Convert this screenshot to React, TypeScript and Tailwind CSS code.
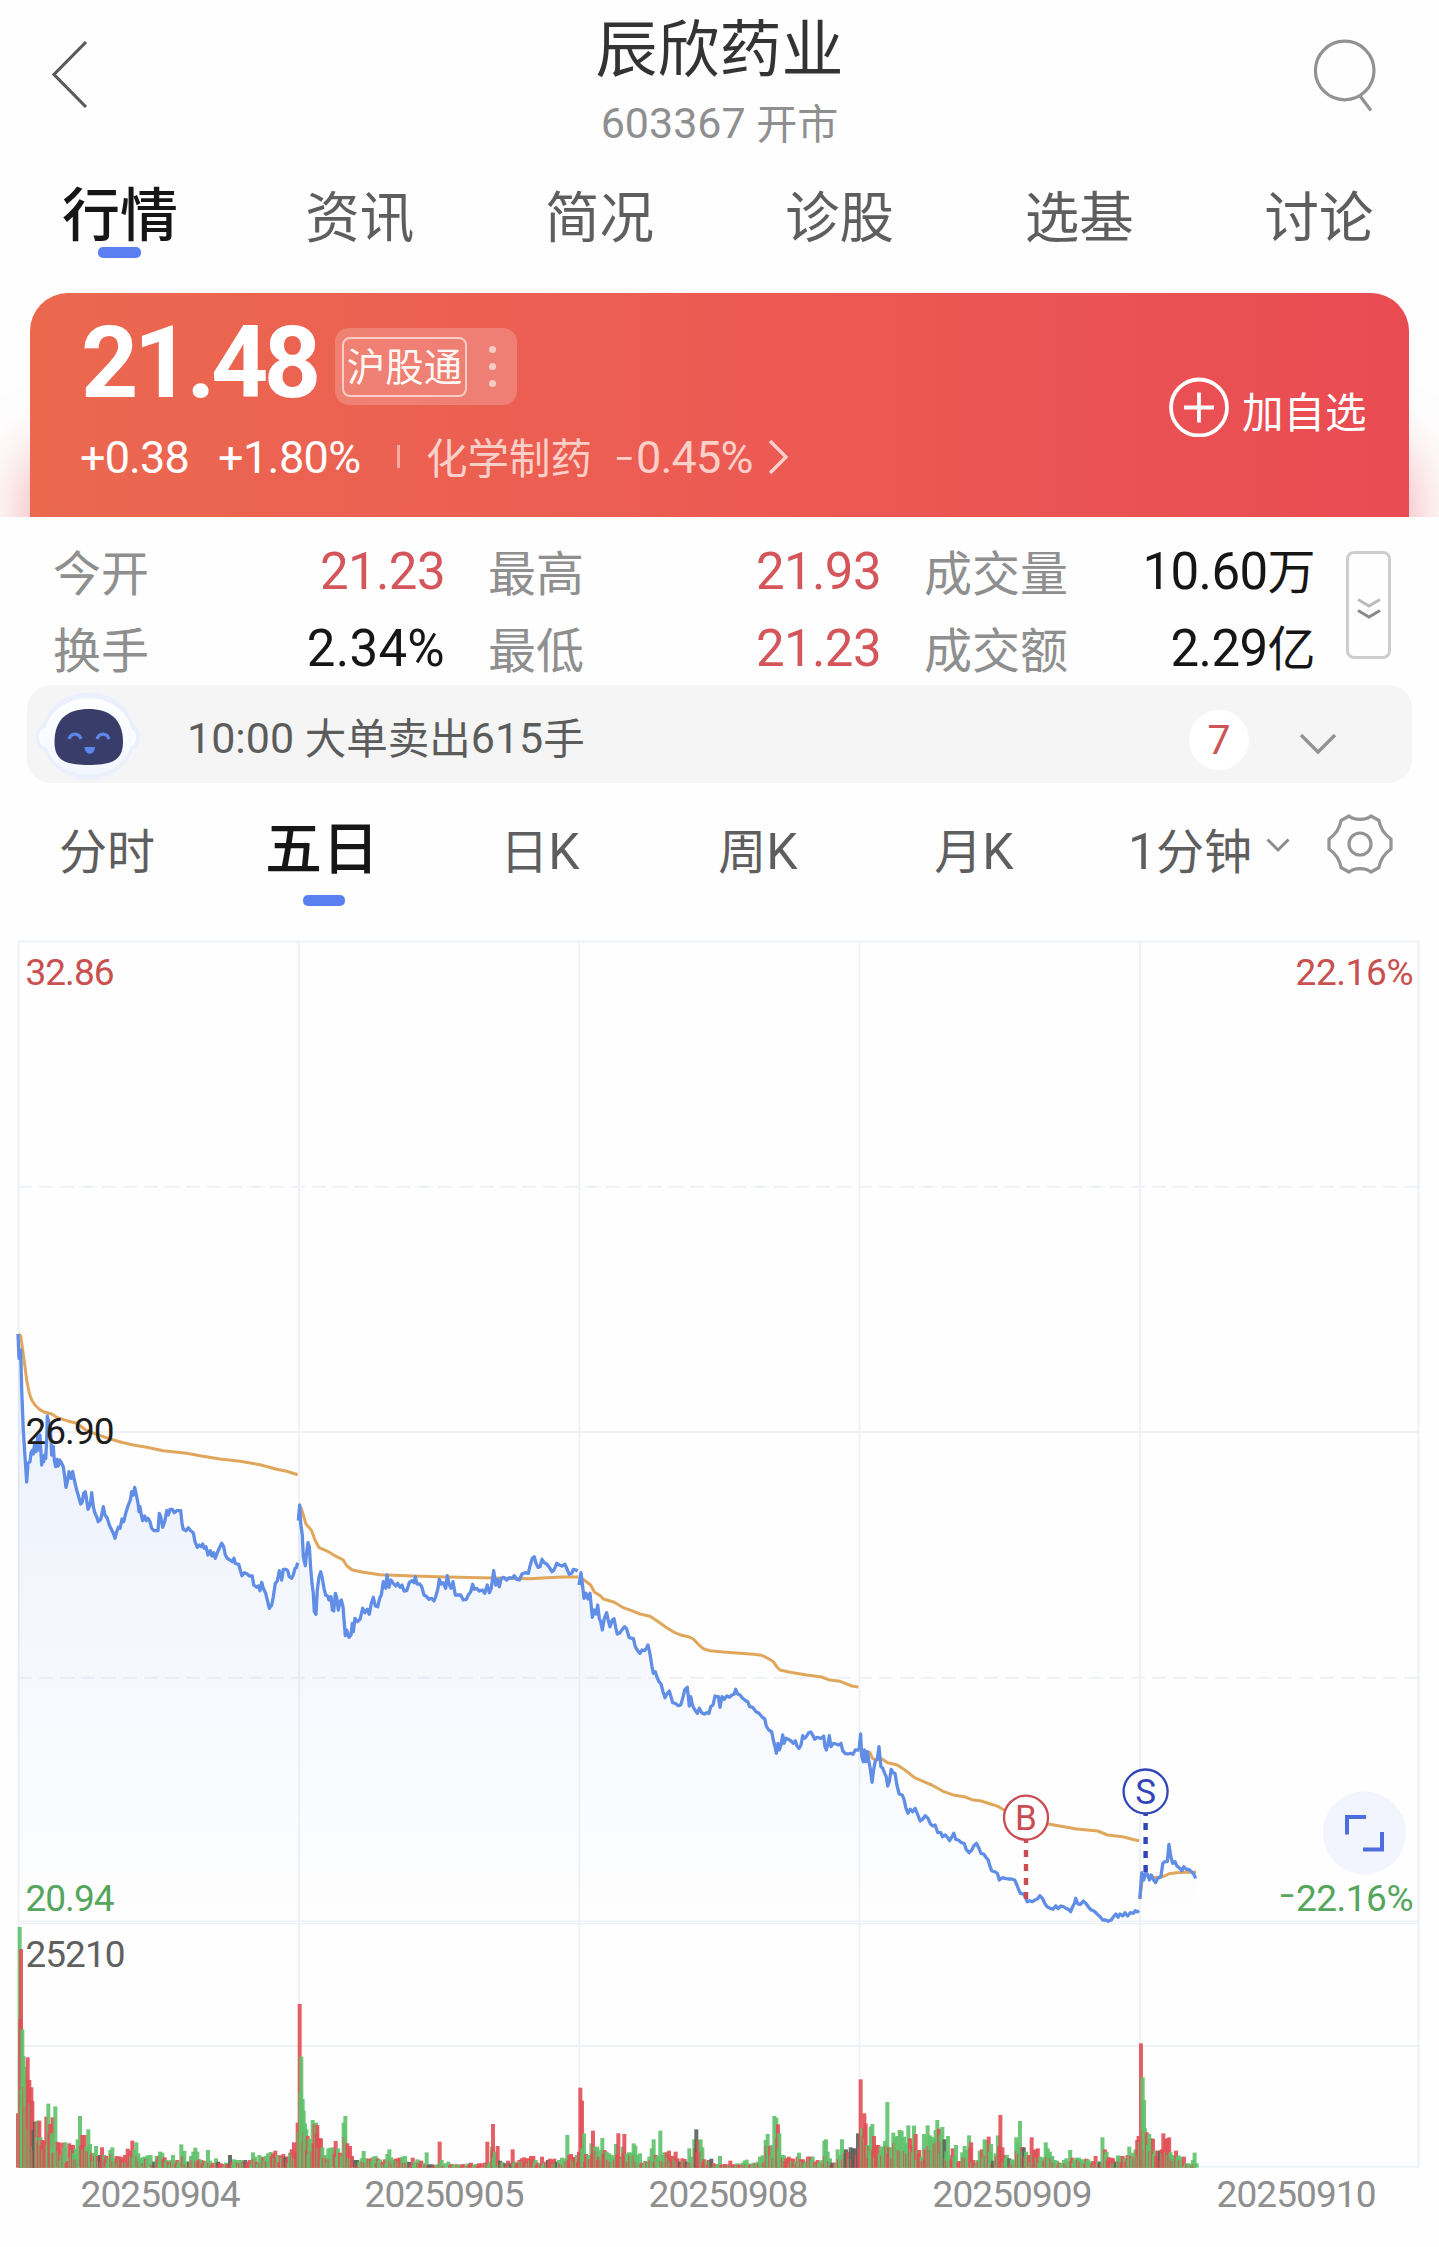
import React from "react";

type Frame = { x: number; y: number; sx: number; sy: number };

/* Each trading day was digitised on its own grid; a frame maps that grid to chart pixels. */
const F1: Frame = { x: 0, y: 1300, sx: 3, sy: 3 };
const F2: Frame = { x: 280, y: 1480, sx: 3, sy: 3 };
const F3: Frame = { x: 560, y: 1530, sx: 3, sy: 3 };
const F4: Frame = { x: 840, y: 1720, sx: 2.618, sy: 3 };
const V1: Frame = { x: 0, y: 1900, sx: 3, sy: 3 };
const V2: Frame = { x: 480, y: 1900, sx: 3, sy: 3 };
const V3: Frame = { x: 900, y: 1900, sx: 2.909, sy: 3 };

const PRICE: [Frame, string][] = [
  [
    F1,
    "54,102 57,175 62,150 65,270 70,390 75,470 80,546 84,490 90,485 93,458 98,450 100,462 104,430 108,455 113,410 117,450 120,405 125,495 128,470 131,485 134,465 137,475 140,420 142,348 147,370 151,375 155,465 160,440 163,480 167,500 171,478 175,498 179,480 184,488 190,500 194,530 198,562 203,540 207,515 213,535 218,515 223,540 230,570 236,590 242,612 247,605 251,580 256,575 260,600 264,628 268,620 272,605 275,578 280,620 285,640 290,650 295,665 302,658 306,640 310,620 315,645 322,655 328,675 335,690 340,700 345,715 350,695 355,682 360,685 366,657 371,665 377,640 385,615 391,600 395,575 400,585 404,562 410,590 415,615 417,635 420,620 424,645 428,662 434,648 439,662 444,655 450,665 455,685 462,692 474,692 478,640 482,650 488,682 494,665 500,632 505,645 510,628 517,628 523,638 530,632 542,632 546,670 550,688 558,692 565,683 572,692 580,698 585,725 592,742 598,735 604,740 608,732 613,745 618,740 624,765 631,752 636,768 641,758 646,775 653,755 660,740 665,730 671,740 676,765 682,775 690,780 697,785 702,775 706,790 716,793 722,815 726,827 733,818 742,822 748,828 757,828 761,855 770,862 776,858 780,872 785,847 790,865 797,880 803,905 808,925 815,915 820,890 826,850 832,843 838,812 845,840 850,808 858,808 863,812 868,830 875,835 880,825 885,805 889,803 893,788",
  ],
  [
    F2,
    "55,122 59,75 62,130 67,165 70,230 76,257 80,215 84,188 88,200 92,265 96,310 100,340 103,395 108,403 112,330 117,290 122,275 127,295 132,325 137,345 143,348 147,360 153,350 157,390 161,393 166,340 170,352 175,390 180,365 184,360 189,380 193,430 196,467 200,450 207,472 213,465 217,430 220,455 225,415 232,425 240,418 248,385 255,398 262,388 268,403 274,370 280,352 286,378 293,380 299,355 304,345 310,305 317,325 321,285 327,322 333,300 340,310 347,318 353,310 360,322 366,315 372,333 380,332 388,308 396,302 402,308 406,290 411,312 419,312 425,320 432,345 440,350 447,358 455,355 462,363 467,350 474,325 478,298 484,312 490,308 497,325 502,287 507,312 513,325 519,305 526,345 534,345 542,345 550,360 559,358 565,345 572,335 578,313 583,328 590,325 598,333 607,330 614,340 622,315 628,338 634,325 641,272 647,315 652,298 658,320 664,295 672,292 680,300 688,293 696,295 703,287 710,298 718,300 726,282 735,278 745,280 750,258 757,235 763,230 768,250 774,262 780,260 786,238 793,248 800,252 808,262 816,275 822,270 830,250 838,255 846,258 855,253 860,265 868,283 875,280 880,268 888,270 893,273",
  ],
  [
    F3,
    "57,165 63,128 68,170 72,205 78,190 84,207 90,190 94,230 97,262 103,240 108,252 113,225 118,265 122,275 127,300 133,265 140,248 145,272 150,290 156,272 162,266 167,292 172,312 180,308 187,298 194,290 200,297 207,322 214,325 220,325 226,350 233,362 240,370 246,360 254,362 259,355 264,345 270,372 276,410 280,430 286,425 291,442 297,455 303,462 309,485 315,503 322,490 328,483 333,500 338,518 346,520 355,527 362,525 368,505 374,480 382,472 388,528 392,500 398,528 405,540 412,550 418,535 425,548 433,552 440,548 447,550 452,530 459,525 465,498 470,500 475,500 480,532 486,500 493,508 500,498 508,502 516,495 523,492 527,478 533,492 540,495 548,505 557,512 563,515 569,530 578,532 588,545 597,550 607,562 614,566 619,588 626,600 635,605 640,630 645,650 649,670 654,640 658,660 663,645 668,615 672,640 678,625 685,628 692,632 700,640 706,632 711,648 717,655 723,645 728,617 734,625 740,618 746,608 752,606 758,615 764,628 772,622 780,625 787,623 791,618 795,650 799,660 804,640 808,617 813,650 820,640 828,642 836,645 843,640 848,662 855,670 863,672 872,670 879,673 886,660 894,660 898,660",
  ],
  [
    F4,
    "50,90 54,42 57,110 61,125 64,90 68,125 72,95 76,125 79,145 84,187 88,150 92,125 98,115 102,80 107,140 112,145 117,160 121,170 125,198 129,185 134,148 139,158 144,160 149,195 155,222 163,225 168,240 172,262 178,280 184,268 190,275 197,265 202,280 210,303 216,298 223,287 230,295 237,312 243,318 249,315 256,338 264,338 268,350 276,345 283,355 287,362 293,350 298,340 303,358 310,360 318,368 325,370 330,388 338,398 345,390 350,378 357,370 364,385 369,400 376,402 382,412 388,420 393,440 397,452 405,455 412,460 417,480 425,473 432,475 440,477 448,477 457,480 462,492 468,510 472,520 480,522 485,530 490,545 497,542 504,545 510,540 517,537 523,527 530,535 536,550 542,560 550,565 558,568 565,557 571,566 578,558 585,560 592,565 600,570 604,575 609,560 614,550 617,535 623,552 630,553 637,543 645,552 651,562 658,570 665,573 673,582 681,590 688,600 695,600 702,604 710,600 716,590 722,582 728,592 733,582 740,588 746,578 753,588 760,578 768,580 773,572 778,576 783,572",
  ],
  [
    F4,
    "785,537 790,458 795,480 800,458 805,462 810,480 815,465 820,478 826,488 832,475 840,470 845,430 850,425 857,425 861,373 866,410 871,430 877,425 882,438 890,445 895,452 900,440 907,448 913,448 920,455 926,462 931,475",
  ],
];

const AVERAGE: [Frame, string][] = [
  [
    F1,
    "57,102 62,108 68,150 75,200 80,240 88,280 95,300 105,315 118,328 135,337 155,342 170,352 200,362 230,370 260,392 290,403 330,417 370,428 400,435 440,442 490,452 560,460 600,467 660,477 720,484 780,494 830,508 860,514 893,524",
  ],
  [
    F2,
    "62,80 70,105 78,133 94,150 105,180 117,203 145,215 170,230 190,240 200,257 217,270 250,277 300,284 400,288 500,291 600,293 680,295 750,296 800,293 850,291 895,291",
  ],
  [
    F3,
    "60,163 66,148 72,150 92,165 103,186 122,198 130,207 163,217 190,233 215,242 240,252 270,259 295,275 320,293 345,308 365,316 385,320 400,327 415,343 430,356 450,362 490,366 530,369 580,373 605,376 622,384 640,395 650,410 660,420 690,427 740,435 785,441 805,449 840,454 875,468 895,471",
  ],
  [
    F4,
    "52,90 70,97 78,97 85,115 95,120 110,117 125,128 150,135 170,150 195,173 240,195 270,214 300,226 325,230 345,239 370,243 400,254 415,260 430,270 487,296 545,312 590,321 620,327 675,333 700,345 740,350 765,358 783,362",
  ],
  [F4, "785,537 792,475 800,465 810,470 820,472 838,472 850,468 862,461 880,458 905,457 932,457"],
];

const VOLUME: [Frame, string][] = [
  [
    V1,
    "54,640r 59,81g 63,147r 67,388g 70,468g 75,500g 79,530g 83,472r 88,540r 94,562r 97,603r 101,690k 105,665k 108,668r 113,662g 118,662r 121,712g 127,720r 133,723r 139,650r 145,611g 151,672r 158,652r 155,700g 166,619g 173,726r 179,728r 185,765g 190,728r 196,727g 203,783r 208,730r 214,735r 219,735r 222,760g 227,745g 233,718g 240,648g 247,705r 254,705r 259,740g 265,688g 270,732g 276,760r 282,760g 288,738g 294,768r 300,765k 306,742r 313,765g 319,768r 325,775g 331,750g 337,742g 343,775g 350,768r 356,770r 362,770r 368,775r 375,765r 383,746r 390,752r 397,722r 403,750g 409,727g 415,760g 420,775g 428,772g 434,770g 442,766g 452,765g 458,785g 463,785k 470,768g 476,768r 480,755g 487,758g 494,772r 500,780g 506,785r 513,780g 519,765g 525,782g 532,780r 537,785g 544,733g 553,753g 560,785g 567,785k 573,768g 580,755g 586,743g 592,755g 598,778r 604,780g 611,782r 618,785g 624,750g 630,782g 640,788r 648,775g 655,785k 662,790r 670,792r 678,788g 684,792r 690,765k 696,785r 702,778g 710,780g 717,780g 724,780g 730,785r 736,780k 743,785r 750,780r 759,757g 765,770g 770,785r 778,765g 784,770g 790,772r 797,768g 804,760g 812,756g 819,760r 826,752r 833,765g 842,766r 850,762r 857,770k 864,770r 870,758g 875,748r 882,727r 888,755r 893,668r 899,312r 904,470g 908,597g 911,632g 915,670g 919,688g 923,708r 928,717g 933,730g 938,660g 944,672r 948,668g 952,675r 958,715r 963,715r 967,742g 975,765g 980,775r 985,745g 992,743g 1000,742g 1007,723r 1014,745g 1020,758r 1031,668g 1036,648g 1042,730r 1050,738r 1056,768r 1065,780k 1072,780k 1078,785g 1085,775g 1091,753g 1098,775g 1106,776r 1113,775r 1120,770g 1127,768g 1133,775r 1140,778g 1148,785r 1155,778r 1162,762g 1168,748g 1174,772g 1180,780g 1187,776r 1194,775r 1200,773r 1207,770g 1215,768g 1222,785g 1228,786k 1238,773r 1245,785g 1252,778g 1258,782g 1264,782r 1272,790g 1280,757g 1288,793k 1297,793k 1305,795r 1313,793g 1319,725r 1325,780g 1335,790g 1345,785g 1355,792r 1363,793g 1372,793r 1380,793g 1390,792r 1400,795g 1405,790g 1413,788r 1422,793g 1430,792g 1437,790r",
  ],
  [
    V2,
    "5,790r 15,788r 22,725r 30,785g 36,740g 39,672r 45,755g 53,738r 60,782k 68,786g 76,790k 84,782r 92,790k 98,748r 105,785g 112,788r 118,780r 125,775r 132,772r 140,775r 147,775r 153,768r 160,768r 167,780g 173,788r 180,790g 186,770r 192,790g 198,785r 204,780k 210,776r 217,780r 223,776r 230,785k 237,780g 246,773g 252,785g 257,775g 262,705g 268,765r 273,762r 280,770r 285,775r 291,765g 297,755r 306,602r 301,563r 312,700g 318,762r 325,765g 334,730g 339,692r 346,740g 352,740g 357,770r 362,750g 367,714g 374,750r 380,755g 388,760g 395,765g 402,770g 408,732g 415,700r 421,770r 428,740g 433,702r 440,762g 447,757g 454,758g 461,730g 466,737g 472,765g 480,760g 487,788r 495,783g 501,785r 508,770g 515,745g 521,718g 527,765r 532,768g 541,692g 547,765g 553,757g 560,757r 567,752r 574,768r 580,768r 587,755r 593,775r 600,785k 607,775r 614,777r 620,785k 628,745g 635,770g 643,718g 649,688k 655,720r 662,718g 667,742g 673,778r 680,782g 687,780r 694,776k 701,790r 708,793r 714,792g 720,768g 727,793r 735,792r 743,793r 751,782r 758,793r 765,793r 772,790g 780,793r 787,788g 794,782g 800,779g 806,790g 813,793r 820,788g 826,790r 833,785g 840,770g 848,766g 857,720g 863,702g 870,738r 877,735g 883,648g 889,653g 894,673r 898,700g 905,765g 912,766g 919,775r 926,770r 932,775r 940,776r 947,785g 953,770r 957,758g 963,778r 970,778r 977,785g 984,770r 992,770r 998,770g 1005,785r 1013,780r 1021,785g 1027,780g 1033,722g 1038,718g 1043,755g 1050,775g 1057,788k 1065,788r 1073,748g 1080,765g 1086,718g 1092,750g 1098,748k 1105,755r 1112,742k 1119,745k 1126,745k 1134,700k 1142,538r 1147,685g 1153,640r 1157,670r 1163,735g 1168,740r 1172,680g 1177,672g 1182,708r 1188,735r 1195,735r 1203,740g 1209,740g 1215,723g 1222,606g 1227,742r 1233,742g 1240,698g 1246,710g 1253,708g 1259,690g 1265,692g 1272,710g 1278,730g 1285,676g 1290,715r 1296,735r 1302,677g 1307,702r 1313,750g 1318,750r 1325,770g 1332,702g 1336,748r 1343,676g 1349,706g 1355,710g 1361,715g 1367,690g 1372,660g 1377,686r 1382,705g 1387,681g 1394,718k 1399,755g 1404,708g 1411,765g 1418,745r 1428,735g 1435,785r",
  ],
  [
    V3,
    "175,783r 181,757g 188,738g 194,750g 201,706g 207,727r 213,780r 219,788r 225,780g 232,752g 238,748r 246,718g 252,720g 258,710r 265,732g 271,782k 278,760g 285,706g 292,645r 298,742r 304,765r 311,765g 318,775k 325,778g 331,780g 338,712g 343,730g 349,663g 355,742r 360,742k 367,755g 375,765r 383,712r 389,750r 395,748r 401,745r 408,770g 415,772g 424,727g 430,745g 436,755g 443,768g 450,780g 457,782g 464,788r 470,790g 477,780g 484,775g 489,785g 495,750g 501,773r 507,778g 514,773g 521,773g 528,778g 535,778g 542,776r 548,778g 555,785g 562,783r 569,768r 576,785g 582,785k 589,712g 596,748r 601,755g 607,772r 614,773r 620,775r 627,785k 634,766g 641,768g 648,768r 655,775g 662,765r 667,740g 672,768r 678,758g 685,748g 690,720r 694,708r 701,430r 706,532g 710,600g 713,685g 718,697r 725,702g 730,715g 736,716r 742,752g 749,752r 756,752k 761,748r 766,700r 772,718r 777,715r 783,712r 787,757g 793,765g 798,768g 803,752r 810,766g 818,770g 826,770r 832,790g 839,790g 846,792g 852,780g 857,758g 863,790g",
  ],
];

const CHART_TOP = 930;
const PRICE_BOTTOM = 1921;
const VOLUME_BOTTOM = 2167.7;

function toPoints([f, data]: [Frame, string]): [number, number][] {
  return data.split(" ").map((pair) => {
    const [x, y] = pair.split(",").map(Number);
    return [f.x + x / f.sx, f.y + y / f.sy];
  });
}

function toLine(points: [number, number][]): string {
  return points.map(([x, y]) => `${x.toFixed(1)},${y.toFixed(1)}`).join(" ");
}

type Bar = { x: number; top: number; fill: string };
const FILL: Record<string, string> = { r: "#e14f55", g: "#5fc26c", k: "#59605a" };

function toBars([f, data]: [Frame, string]): Bar[] {
  const bars = data.split(" ").map((item) => {
    const [x, rest] = item.split(",");
    return {
      x: f.x + Number(x) / f.sx,
      top: f.y + parseInt(rest, 10) / f.sy,
      fill: FILL[rest.slice(-1)],
    };
  });
  const out: Bar[] = [];
  bars.forEach((bar, i) => {
    out.push(bar);
    const next = bars[i + 1];
    /* The quieter minute between two recorded peaks. */
    if (next && i % 3 !== 0) {
      const low = Math.max(bar.top, next.top);
      out.push({
        x: (bar.x + next.x) / 2,
        top: low + (VOLUME_BOTTOM - low) * (0.2 + (i % 4) * 0.12),
        fill: bar.fill === FILL.r ? FILL.g : FILL.r,
      });
    }
  });
  return out;
}

const LABELS: { t: string; x: number; y: number; w: number; c: string }[] = [
  { t: "32.86", x: 25.5, y: 985, w: 89, c: "#c9504f" },
  { t: "22.16%", x: 1295.5, y: 985, w: 118, c: "#c9504f" },
  { t: "26.90", x: 25.5, y: 1444, w: 89, c: "#1c1c1c" },
  { t: "20.94", x: 25.5, y: 1911, w: 89, c: "#55a65c" },
  { t: "22.16%", x: 1296, y: 1911, w: 117.5, c: "#55a65c" },
  { t: "25210", x: 25.5, y: 1966.5, w: 100, c: "#606060" },
  { t: "20250904", x: 80.5, y: 2206.5, w: 160, c: "#8f8f8f" },
  { t: "20250905", x: 364.5, y: 2206.5, w: 160, c: "#8f8f8f" },
  { t: "20250908", x: 648.5, y: 2206.5, w: 160, c: "#8f8f8f" },
  { t: "20250909", x: 932.5, y: 2206.5, w: 160, c: "#8f8f8f" },
  { t: "20250910", x: 1216.5, y: 2206.5, w: 160, c: "#8f8f8f" },
];

function Marker({ x, y, end, letter, color }: { x: number; y: number; end: number; letter: string; color: string }) {
  return (
    <g>
      <line x1={x} x2={x} y1={end} y2={y + 22} stroke={color} strokeWidth="4.4" strokeDasharray="7 7" />
      <circle cx={x} cy={y} r="22" fill="#fff" stroke={color} strokeWidth="2.3" />
      <text x={x} y={y + 12.5} textAnchor="middle" fontSize="35" fill={color}>
        {letter}
      </text>
    </g>
  );
}

function Chart() {
  const grid = "#eef1f6";
  return (
    <svg className="block h-[1317px] w-full" viewBox={`0 ${CHART_TOP} 1439 1317`}>
      <defs>
        <linearGradient id="area" gradientUnits="userSpaceOnUse" x1="0" x2="0" y1="1330" y2="1921">
          <stop offset="0" stopColor="#5b86ee" stopOpacity="0.12" />
          <stop offset="1" stopColor="#5b86ee" stopOpacity="0" />
        </linearGradient>
      </defs>
      <g stroke={grid} strokeWidth="2" fill="none">
        {[18.7, 299, 579.3, 859.5, 1140, 1418.5].map((x) => (
          <line key={x} x1={x} x2={x} y1="941" y2="2167" />
        ))}
        {[941.5, 1432, 2046, 2166.7].map((y) => (
          <line key={y} x1="18" x2="1419" y1={y} y2={y} />
        ))}
        <line x1="18" x2="1419" y1="1921.2" y2="1921.2" strokeWidth="1.5" />
        <line x1="18" x2="1419" y1="1923.8" y2="1923.8" strokeWidth="1.5" />
        <line x1="18" x2="1419" y1="1186.7" y2="1186.7" strokeDasharray="14 7" />
        <line x1="18" x2="1419" y1="1677.7" y2="1677.7" strokeDasharray="14 7" />
      </g>
      {PRICE.map((day, i) => {
        const p = toPoints(day);
        return (
          <polygon
            key={i}
            fill="url(#area)"
            points={`${p[0][0]},${PRICE_BOTTOM} ${toLine(p)} ${p[p.length - 1][0]},${PRICE_BOTTOM}`}
          />
        );
      })}
      {AVERAGE.map((day, i) => (
        <polyline key={i} fill="none" stroke="#e0a75c" strokeWidth="3" strokeLinejoin="round" points={toLine(toPoints(day))} />
      ))}
      {PRICE.map((day, i) => (
        <polyline key={i} fill="none" stroke="#608ee6" strokeWidth="3.3" strokeLinejoin="round" points={toLine(toPoints(day))} />
      ))}
      {VOLUME.flatMap(toBars).map((b, i) => (
        <rect key={i} x={b.x - 2} y={b.top} width="4" height={VOLUME_BOTTOM - b.top} fill={b.fill} fillOpacity="0.9" />
      ))}
      <Marker x={1026} y={1817.7} end={1899} letter="B" color="#c84c52" />
      <Marker x={1145.6} y={1791.5} end={1872} letter="S" color="#3144b8" />
      <circle cx="1364.4" cy="1833" r="41.5" fill="#f2f5fd" />
      <path d="M1366 1817H1347V1834.5M1363 1849.5H1382V1832" fill="none" stroke="#4d6fdd" strokeWidth="4" />
      {LABELS.map((l) => (
        <text key={`${l.t}-${l.y}`} x={l.x} y={l.y} textLength={l.w} fontSize="37" fill={l.c}>
          {l.t}
        </text>
      ))}
      <text x="1278.500" y="1909" textLength="17" lengthAdjust="spacingAndGlyphs" fontSize="37" fill="#55a65c">
        −
      </text>
    </svg>
  );
}

function Header() {
  return (
    <header className="grid h-[150px] grid-cols-[200px_1fr_200px]">
      <svg className="mt-[36px] ml-[46px] h-[78px] w-[50px]" viewBox="46 36 50 78" fill="none">
        <path d="M86 42L54 74.5L86 107" stroke="#5a5a5a" strokeWidth="3.2" />
      </svg>
      <div className="flex flex-col items-center pt-[20px]">
        <h1 className="text-[62px] leading-none whitespace-nowrap text-[#333]">辰欣药业</h1>
        <div className="mt-[20px] text-[43px] leading-none whitespace-nowrap text-[#8f8f8f]">
          603367 <span className="relative top-[1px] text-[41px]">开市</span>
        </div>
      </div>
      <svg className="mt-[30px] ml-[66px] h-[90px] w-[80px]" viewBox="1305 30 80 90" fill="none" stroke="#929292" strokeWidth="3.2">
        <circle cx="1344.7" cy="70.5" r="29.3" />
        <path d="M1360 96L1371 110.5" />
      </svg>
    </header>
  );
}

function MainTabs() {
  return (
    <nav className="grid h-[143px] grid-cols-6">
      <div className="relative flex justify-center pt-[37px] text-[58px] leading-none font-medium text-[#161616]">
        行情
        <span className="absolute top-[97px] left-[98px] h-[11px] w-[43px] rounded-[5px] bg-[#5b7ff0]" />
      </div>
      {["资讯", "简况", "诊股", "选基", "讨论"].map((t) => (
        <div key={t} className="flex justify-center pt-[41px] text-[54.5px] leading-none text-[#5e5e5e]">
          {t}
        </div>
      ))}
    </nav>
  );
}

function QuoteCard() {
  return (
    <section className="h-[224px] overflow-hidden pr-[30px] pl-[30px]">
      <div className="flex h-[260px] rounded-[38px] bg-linear-to-r from-[#eb684f] via-[#ec5b53] to-[#e94b53] shadow-[0_155px_60px_0_rgba(233,75,83,0.5)]">
        <div className="w-[1130px] text-white">
          <div className="flex h-[142px]">
            <div className="w-[305px] pt-[20px] pl-[51px] text-[100px] leading-none font-bold tracking-[-4.6px]">21.48</div>
            <div className="mt-[35px] flex h-[77px] w-[182px] items-center rounded-[14px] bg-white/20 pl-[7px]">
              <div className="flex h-[60px] w-[125px] items-center justify-center rounded-[8px] border-2 border-white/60 pt-[4px] text-[38.5px] leading-none whitespace-nowrap text-white/95">
                沪股通
              </div>
              <div className="ml-[22px] flex flex-col gap-[10px]">
                <span className="h-[7px] w-[7px] rounded-full bg-white/60" />
                <span className="h-[7px] w-[7px] rounded-full bg-white/60" />
                <span className="h-[7px] w-[7px] rounded-full bg-white/60" />
              </div>
            </div>
          </div>
          <div className="flex items-baseline pl-[50px] text-[45px] leading-none whitespace-nowrap">
            <span className="w-[138px] tracking-[-0.9px]">+0.38</span>
            <span className="w-[179px] tracking-[-0.6px]">+1.80%</span>
            <span className="h-[23px] w-[3px] -translate-y-[5px] bg-[#f8aaa1]" />
            <span className="ml-[26px] w-[188px] translate-y-[1px] text-[41.5px] text-[#fdcfc9]">化学制药</span>
            <span className="w-[22px] -translate-y-[2px] text-[36px] text-[#fdcfc9]">−</span>
            <span className="w-[131px] tracking-[-0.8px] text-[#fdcfc9]">0.45%</span>
            <svg className="h-[36px] w-[24px] translate-y-[2px]" viewBox="0 0 24 36" fill="none" stroke="#fdcfc9" strokeWidth="3.4">
              <path d="M3 2L19 18L3 34" />
            </svg>
          </div>
        </div>
        <div className="flex h-[224px] items-center">
          <svg className="ml-[7px] h-[64px] w-[64px]" viewBox="0 0 64 64" fill="none" stroke="#fff" strokeWidth="3.8">
            <circle cx="32" cy="34.5" r="28" />
            <path d="M17 34.5H47M32 19.5V49.5" />
          </svg>
          <span className="ml-[11px] pt-[18px] text-[41.5px] leading-none whitespace-nowrap text-white">加自选</span>
        </div>
      </div>
    </section>
  );
}

function Stat({ label, value, unit, red }: { label: string; value: string; unit?: string; red?: boolean }) {
  return (
    <div className="flex h-[77px] items-baseline justify-between leading-[77px] whitespace-nowrap">
      <span className="translate-x-[1px] translate-y-[2px] text-[48px] text-[#8f8f8f]">{label}</span>
      <span
        className={
          red
            ? "translate-x-[-1px] text-[51px] tracking-[-0.6px] text-[#d4565b]"
            : value.endsWith("%")
              ? "translate-x-[-1px] text-[51px] tracking-[0.3px] text-[#161616]"
              : "translate-x-[-1px] text-[51px] tracking-[-0.6px] text-[#161616]"
        }
      >
        {value}
        {unit && <span className="text-[48px]">{unit}</span>}
      </span>
    </div>
  );
}

function Stats() {
  return (
    <section className="flex h-[168px] pl-[52px]">
      <div className="grid h-[154px] w-[1264px] grid-cols-[394px_395px_393px] gap-x-[41px] pt-[16px]">
        <Stat label="今开" value="21.23" red />
        <Stat label="最高" value="21.93" red />
        <Stat label="成交量" value="10.60" unit="万" />
        <Stat label="换手" value="2.34%" />
        <Stat label="最低" value="21.23" red />
        <Stat label="成交额" value="2.29" unit="亿" />
      </div>
      <div className="mt-[34px] ml-[30px] flex h-[108px] w-[45px] justify-center rounded-[8px] border-[3px] border-[#cdcdcd] pt-[43px]">
        <svg className="h-[26px] w-[26px]" viewBox="0 0 26 26" fill="none" strokeWidth="3">
          <path d="M2 2.5L13 9L24 2.5" stroke="#bcbcbc" />
          <path d="M2 13.5L13 20L24 13.5" stroke="#8a8a8a" />
        </svg>
      </div>
    </section>
  );
}

function Robot() {
  return (
    <svg className="h-[98px] w-[120px]" viewBox="28 685 120 98">
      <defs>
        <linearGradient id="helmet" x1="0" x2="0" y1="0" y2="1">
          <stop offset="0" stopColor="#ffffff" />
          <stop offset="1" stopColor="#f3f6ff" />
        </linearGradient>
      </defs>
      <ellipse cx="89.5" cy="736" rx="47" ry="43.500" fill="#eaf0fc" />
      <rect x="37" y="723" width="104" height="28" rx="13" fill="#eaf0fc" />
      <rect x="40" y="728" width="97" height="19" rx="8" fill="#fbfcff" />
      <ellipse cx="89.5" cy="736.5" rx="44" ry="38.5" fill="url(#helmet)" />
      <path d="M89.7 709C109 709 124 718 124 742C124 759 115 765 89.7 765C64 765 55.5 759 55.5 742C55.5 718 70 709 89.7 709Z" fill="#393d69" />
      <g fill="none" stroke="#5d86e8" strokeWidth="3.2">
        <path d="M70 739C72 732.5 80 732.5 82 739" />
        <path d="M98 739C100 732.5 108 732.5 110 739" />
      </g>
      <path d="M85.5 747H96C96 756 85.5 756 85.5 747Z" fill="#5d86e8" />
    </svg>
  );
}

function Notice() {
  return (
    <section className="mr-[27px] ml-[27px] flex h-[98px] items-center rounded-[24px] bg-[#f5f5f5]">
      <Robot />
      <div className="ml-[40px] w-[972px] pt-[9px] text-[43px] leading-none whitespace-nowrap text-[#5c5c5c]">
        10:00 <span className="relative top-[1px] text-[41.5px]">大单卖出</span>615<span className="relative top-[1px] text-[41.5px]">手</span>
      </div>
      <div className="mt-[11px] ml-[30px] flex h-[60px] w-[60px] items-center justify-center rounded-full bg-white pt-[2px] text-[41px] leading-none text-[#cc5358]">
        7
      </div>
      <svg className="mt-[19px] ml-[49px] h-[24px] w-[40px]" viewBox="0 0 40 24" fill="none" stroke="#949494" strokeWidth="3.4">
        <path d="M3 3L20 20L37 3" />
      </svg>
    </section>
  );
}

function PeriodTabs() {
  return (
    <nav className="flex h-[147px] items-baseline pt-[20px] leading-none whitespace-nowrap text-[#5e5e5e]">
      <div className="w-[214px] text-center text-[48px]">分时</div>
      <div className="relative w-[216px] text-center text-[57px] font-medium text-[#161616]">
        五日
        <span className="absolute top-[74px] left-[89px] h-[11px] w-[42px] rounded-[5px] bg-[#5b7ff0]" />
      </div>
      {["日", "周", "月"].map((t, i) => (
        <div key={t} className={i === 0 ? "w-[220px] text-center text-[50px]" : "w-[216px] text-center text-[50px]"}>
          <span className="text-[48px]">{t}</span>K
        </div>
      ))}
      <div className="ml-[46px] w-[137px] text-[50px]">
        1<span className="text-[48px]">分钟</span>
      </div>
      <svg className="h-[16px] w-[26px] -translate-y-[16px]" viewBox="0 0 26 16" fill="none" stroke="#8c8c8c" strokeWidth="3">
        <path d="M2.5 2.5L13 13L23.5 2.5" />
      </svg>
      <svg className="ml-[34px] h-[66px] w-[70px] translate-y-[8px]" viewBox="-35 -33 70 66" fill="none" stroke="#949494" strokeWidth="3.2" strokeLinejoin="round">
        <path d="M-11 -28C-6 -23.5 6 -23.5 11 -28L19 -23.5C20 -17 24 -10 31 -5V5C24 10 20 17 19 23.5L11 28C6 23.5 -6 23.5 -11 28L-19 23.5C-20 17 -24 10 -31 5V-5C-24 -10 -20 -17 -19 -23.5Z" />
        <circle r="11" />
      </svg>
    </nav>
  );
}

export default function App() {
  return (
    <main className="h-[2247px] w-[1439px] overflow-hidden bg-[#fefefe] font-['Roboto','Noto_Sans_CJK_SC',sans-serif]">
      <Header />
      <MainTabs />
      <QuoteCard />
      <Stats />
      <Notice />
      <PeriodTabs />
      <Chart />
    </main>
  );
}
